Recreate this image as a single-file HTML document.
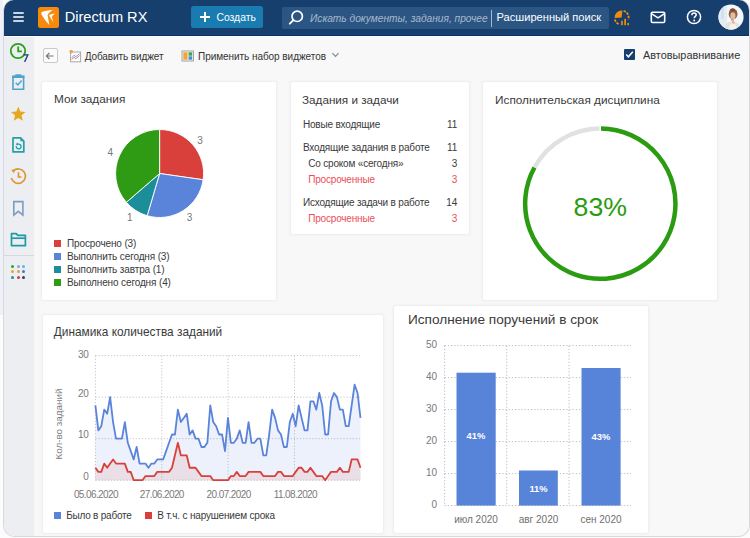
<!DOCTYPE html>
<html><head><meta charset="utf-8">
<style>
html,body{margin:0;padding:0;}
body{width:750px;height:538px;position:relative;overflow:hidden;background:#fcfcfd;font-family:"Liberation Sans", sans-serif;}
.t{position:absolute;white-space:nowrap;line-height:1;}
svg{display:block;}
</style></head><body>
<div style="position:absolute;left:0px;top:0px;width:3px;height:315px;background:#eef1fa"></div>
<div style="position:absolute;left:4px;top:0px;width:745px;height:536px;background:#f8f8f8;border-radius:11px;box-shadow:0 0 0 1px #d9d9d9;overflow:hidden"></div>
<div style="position:absolute;left:4px;top:0;width:745px;height:34.5px;background:#163f6e;border-radius:10px 10px 0 0;border-bottom:1px solid #0d3261"></div>
<div style="position:absolute;left:4px;top:35.5px;width:745px;height:1.2px;background:#ffffff"></div>
<div style="position:absolute;left:4px;top:36.7px;width:30px;height:499.3px;background:#eceef2;border-bottom-left-radius:11px"></div>
<div style="position:absolute;left:4px;top:255px;width:30px;height:1px;background:#d6d8dc"></div>
<div style="position:absolute;left:13.4px;top:12.3px;width:11.1px;height:1.9px;background:#c9d3df;border-radius:1px"></div>
<div style="position:absolute;left:13.4px;top:16.2px;width:11.1px;height:1.9px;background:#c9d3df;border-radius:1px"></div>
<div style="position:absolute;left:13.4px;top:20.1px;width:11.1px;height:1.9px;background:#c9d3df;border-radius:1px"></div>
<svg style="position:absolute;left:38px;top:6.5px" width="21" height="21" viewBox="0 0 21 21">
<rect x="0" y="0" width="21" height="21" rx="2.5" fill="#f7890d"/>
<path d="M3.3 6.1 Q3.5 4.9 5 4.6 C8 3.9 11.5 3.3 14.8 3.1 C12.3 4.6 10.3 6.3 9.6 8.2 C10.2 11.5 10.9 15 11.3 18.1 C8.3 14.8 5.2 10.5 3.6 7.4 Q3.2 6.7 3.3 6.1Z" fill="#fff"/>
<path d="M10.9 8.1 C13 7.1 15 6.6 17.1 6.4 C15.4 7.6 14.2 8.8 13.8 10 C14.3 11.6 14.9 13.3 15.4 15 C13.6 13 11.9 10.5 10.9 8.1Z" fill="#fff"/>
</svg>
<div class="t" style="left:64.70px;top:10px;font-size:14.6px;color:#ffffff;">Directum RX</div>
<div style="position:absolute;left:191px;top:6.3px;width:72px;height:22.2px;background:#1a7bb0;border-radius:2.5px"></div>
<div style="position:absolute;left:200px;top:16.4px;width:10px;height:1.5px;background:#fff"></div>
<div style="position:absolute;left:204.25px;top:12.15px;width:1.5px;height:10px;background:#fff"></div>
<div class="t" style="left:216.40px;top:13px;font-size:10.4px;color:#ffffff;">Создать</div>
<div style="position:absolute;left:282px;top:7px;width:327px;height:21.5px;background:#2b5684;border-radius:2px"></div>
<svg style="position:absolute;left:286px;top:8px" width="20" height="20" viewBox="0 0 20 20">
<circle cx="11.2" cy="8.3" r="5.2" fill="none" stroke="#fff" stroke-width="1.7"/>
<line x1="7.4" y1="12.1" x2="3.8" y2="15.7" stroke="#fff" stroke-width="1.9" stroke-linecap="round"/>
</svg>
<div class="t" style="left:310.00px;top:14px;font-size:10.2px;color:#a9b8cb;font-style:italic">Искать документы, задания, прочее</div>
<div style="position:absolute;left:491.3px;top:9.5px;width:1px;height:17px;background:#a9b8cb"></div>
<div class="t" style="left:496.60px;top:12px;font-size:11.1px;color:#ffffff;">Расширенный поиск</div>
<svg style="position:absolute;left:613px;top:9px" width="18" height="18" viewBox="0 0 18 18">
<path d="M8.6 8.6 L1.6 8.9 A7 7 0 0 1 9.4 1.6 Z" fill="#f28c0f"/>
<path d="M10.6 1.9 A6.9 6.9 0 0 1 15.4 10.4" fill="none" stroke="#f28c0f" stroke-width="1.8" stroke-dasharray="2.4 1.1"/>
<path d="M1.8 10.6 A6.9 6.9 0 0 0 6.4 15.3" fill="none" stroke="#f28c0f" stroke-width="1.8" stroke-dasharray="2.4 1.1"/>
<rect x="8.2" y="11.8" width="1.6" height="4.4" fill="#f28c0f"/>
<rect x="11.3" y="9.8" width="1.7" height="6.4" fill="#f28c0f"/>
<rect x="14.3" y="14" width="1.7" height="2.2" fill="#f28c0f"/>
</svg>
<svg style="position:absolute;left:650px;top:10.7px" width="16" height="13" viewBox="0 0 16 13">
<rect x="1.3" y="1.3" width="13.4" height="10.2" rx="1.2" fill="none" stroke="#fff" stroke-width="1.6"/>
<path d="M1.8 2.8 L8 6.9 L14.2 2.8" fill="none" stroke="#fff" stroke-width="1.5"/>
</svg>
<svg style="position:absolute;left:686px;top:9px" width="16" height="16" viewBox="0 0 16 16">
<circle cx="8" cy="8" r="6.6" fill="none" stroke="#fff" stroke-width="1.5"/>
<path d="M5.9 6.2 C5.9 4.8 6.9 4.1 8.1 4.1 C9.3 4.1 10.2 4.9 10.2 6 C10.2 7.3 8.2 7.6 8.2 9.2" fill="none" stroke="#fff" stroke-width="1.5"/>
<circle cx="8.2" cy="11.5" r="0.95" fill="#fff"/>
</svg>
<svg style="position:absolute;left:717.5px;top:4px" width="26" height="26" viewBox="0 0 26 26">
<defs><clipPath id="av"><circle cx="13" cy="13" r="12.5"/></clipPath></defs>
<circle cx="13" cy="13" r="12.6" fill="#f4f7fa"/>
<g clip-path="url(#av)">
<rect x="0" y="0" width="9" height="26" fill="#e3ebf3"/>
<rect x="3" y="3" width="3" height="12" fill="#d4e0ec"/>
<path d="M6.5 26 C7 19.5 10 17.6 14 17.4 C19 17.6 22 19.5 22.5 26Z" fill="#e4e0da"/>
<path d="M10.5 26 C11 21 12.5 19.5 15 19.3 C17 19.5 18.5 21 19 26Z" fill="#f3f1ee"/>
<ellipse cx="15.1" cy="10" rx="4.4" ry="5.2" fill="#8c5d3f"/>
<ellipse cx="14.6" cy="5.7" rx="2.6" ry="1.5" fill="#7a4d33"/>
<ellipse cx="14.9" cy="11.8" rx="2.6" ry="3.5" fill="#e2bb9c"/>
<path d="M13.2 15.6 L15.6 14.8 L16.6 19.6 L14.6 19.8 Z" fill="#e7b58a"/>
<circle cx="13.9" cy="15.6" r="0.8" fill="#d9708a"/>
</g>
</svg>
<svg style="position:absolute;left:8px;top:41px" width="22" height="22" viewBox="0 0 22 22">
<circle cx="10" cy="10" r="7.2" fill="none" stroke="#2d9f1c" stroke-width="1.8"/>
<path d="M10.2 5.6 V10.3 H13.8" fill="none" stroke="#2d9f1c" stroke-width="1.8"/>
</svg>
<svg style="position:absolute;left:20px;top:52px" width="12" height="12" viewBox="0 0 12 12">
<path d="M3.6 2.9 H7.9 L4.6 9.9" fill="none" stroke="#1d3f73" stroke-width="1.3" stroke-linejoin="miter"/>
</svg>
<svg style="position:absolute;left:11px;top:73px" width="15" height="18" viewBox="0 0 15 18">
<path d="M2 3 V16.2 H12.6 V3" fill="none" stroke="#4ea3cf" stroke-width="1.6"/>
<rect x="1.2" y="2.4" width="12.2" height="2.6" fill="#4ea3cf"/>
<rect x="4.3" y="1.3" width="6" height="2" fill="#4ea3cf"/>
<path d="M4.7 9.8 L6.9 12 L10.6 7.6" fill="none" stroke="#4ea3cf" stroke-width="1.5"/>
</svg>
<svg style="position:absolute;left:10px;top:105.5px" width="17" height="16" viewBox="0 0 17 16">
<path d="M8.3 0.6 L10.3 5.4 L15.6 5.9 L11.6 9.3 L12.8 14.7 L8.3 11.9 L3.8 14.7 L5 9.3 L1 5.9 L6.3 5.4 Z" fill="#e6a81c"/>
</svg>
<svg style="position:absolute;left:11px;top:136px" width="15" height="18" viewBox="0 0 15 18">
<path d="M2 1.9 H9.6 L12.8 5.1 V15.9 H2 Z" fill="none" stroke="#24a0a6" stroke-width="1.7" stroke-linejoin="round"/>
<path d="M9.4 2 V5.3 H12.7" fill="#24a0a6"/>
<path d="M5.3 10.2 A2.4 2.4 0 1 0 7.5 8.1 L5.6 8.1" fill="none" stroke="#24a0a6" stroke-width="1.4"/>
<path d="M4.8 8.2 L6.8 6.6 L6.8 9.8 Z" fill="#24a0a6"/>
</svg>
<svg style="position:absolute;left:9px;top:167px" width="19" height="19" viewBox="0 0 19 19">
<path d="M4.2 4 A7.2 7.2 0 1 1 2.3 11" fill="none" stroke="#df9532" stroke-width="1.6"/>
<path d="M2.2 2.8 L6.3 2.5 L4.7 6.2 Z" fill="#df9532"/>
<path d="M9.5 5.3 V10 H12.4" fill="none" stroke="#df9532" stroke-width="1.6"/>
</svg>
<svg style="position:absolute;left:12px;top:199.5px" width="13" height="17" viewBox="0 0 13 17">
<path d="M1.8 1.6 H10.9 V15 L6.35 11.3 L1.8 15 Z" fill="none" stroke="#7b9dc2" stroke-width="1.6" stroke-linejoin="miter"/>
</svg>
<svg style="position:absolute;left:9.5px;top:231.5px" width="17" height="15" viewBox="0 0 17 15">
<path d="M1.5 1.6 H6.2 L7.8 3.4 H15.4 V13.6 H1.5 Z" fill="none" stroke="#1e9aa2" stroke-width="1.7" stroke-linejoin="round"/>
<path d="M1.5 6.2 H15.4" stroke="#1e9aa2" stroke-width="1.7"/>
</svg>
<div style="position:absolute;left:11.1px;top:264.5px;width:3.4px;height:3.4px;background:#2aa52a;border-radius:50%"></div>
<div style="position:absolute;left:16.55px;top:264.5px;width:3.4px;height:3.4px;background:#8ca9c6;border-radius:50%"></div>
<div style="position:absolute;left:22.0px;top:264.5px;width:3.4px;height:3.4px;background:#63b6d6;border-radius:50%"></div>
<div style="position:absolute;left:11.1px;top:270.05px;width:3.4px;height:3.4px;background:#eaa722;border-radius:50%"></div>
<div style="position:absolute;left:16.55px;top:270.05px;width:3.4px;height:3.4px;background:#d9a152;border-radius:50%"></div>
<div style="position:absolute;left:22.0px;top:270.05px;width:3.4px;height:3.4px;background:#3a7bd2;border-radius:50%"></div>
<div style="position:absolute;left:11.1px;top:275.6px;width:3.4px;height:3.4px;background:#1f90a2;border-radius:50%"></div>
<div style="position:absolute;left:16.55px;top:275.6px;width:3.4px;height:3.4px;background:#e2343f;border-radius:50%"></div>
<div style="position:absolute;left:22.0px;top:275.6px;width:3.4px;height:3.4px;background:#3f4046;border-radius:50%"></div>
<div style="position:absolute;left:42.5px;top:48px;width:15px;height:15px;box-sizing:border-box;border:1px solid #c9c9c9;border-radius:2px;background:#fbfbfb"></div>
<svg style="position:absolute;left:44px;top:49.5px" width="12" height="12" viewBox="0 0 12 12">
<path d="M9.6 6 H2.6 M5.4 3 L2.4 6 L5.4 9" fill="none" stroke="#777" stroke-width="1.2"/>
</svg>
<svg style="position:absolute;left:69px;top:50px" width="13" height="13" viewBox="0 0 13 13">
<rect x="1.6" y="2" width="10" height="9.8" fill="#fff" stroke="#a8a8a8" stroke-width="1"/>
<path d="M2.6 9.4 L5 7.4 L7 8.6 L10.6 5.4" fill="none" stroke="#e46a6a" stroke-width="0.9"/>
<path d="M2.6 7.6 L5 5.4 L7 6.6 L10.6 3.6" fill="none" stroke="#6c9be0" stroke-width="0.9"/>
<circle cx="2.2" cy="1.7" r="1.8" fill="#f2a444"/>
</svg>
<div class="t" style="left:84.70px;top:52px;font-size:10px;color:#333333;letter-spacing:-0.1px">Добавить виджет</div>
<svg style="position:absolute;left:181px;top:50px" width="14" height="12" viewBox="0 0 14 12">
<rect x="1" y="1" width="11.5" height="10" fill="#f4f4f4" stroke="#9a9a9a" stroke-width="0.9"/>
<rect x="2.3" y="2.3" width="4.3" height="7.4" fill="#f3a53a"/>
<rect x="7.6" y="2.3" width="3.6" height="3.4" fill="#3aa84a"/>
<rect x="7.6" y="6.3" width="3.6" height="3.4" fill="#4a8ad8"/>
</svg>
<div class="t" style="left:198.00px;top:52px;font-size:10px;color:#333333;letter-spacing:-0.05px">Применить набор виджетов</div>
<svg style="position:absolute;left:331px;top:52px" width="9" height="6" viewBox="0 0 9 6">
<path d="M1.4 1.2 L4.5 4.3 L7.6 1.2" fill="none" stroke="#888" stroke-width="1.2"/>
</svg>
<div style="position:absolute;left:623.5px;top:49px;width:11px;height:11px;background:#173f6e;border-radius:1px"></div>
<svg style="position:absolute;left:623.5px;top:49px" width="11" height="11" viewBox="0 0 11 11">
<path d="M2.3 5.6 L4.4 7.8 L8.8 2.8" fill="none" stroke="#fff" stroke-width="1.5"/>
</svg>
<div class="t" style="left:643.00px;top:50px;font-size:10.9px;color:#333333;">Автовыравнивание</div>
<div style="position:absolute;left:42px;top:82px;width:234px;height:218px;background:#fff;border-radius:2px;box-shadow:0 0 3px 1px rgba(0,0,0,0.055)"></div>
<div style="position:absolute;left:291px;top:82px;width:177.5px;height:151.5px;background:#fff;border-radius:2px;box-shadow:0 0 3px 1px rgba(0,0,0,0.055)"></div>
<div style="position:absolute;left:482.8px;top:82px;width:234.5px;height:218.3px;background:#fff;border-radius:2px;box-shadow:0 0 3px 1px rgba(0,0,0,0.055)"></div>
<div style="position:absolute;left:42.7px;top:315px;width:340px;height:218px;background:#fff;border-radius:2px;box-shadow:0 0 3px 1px rgba(0,0,0,0.055)"></div>
<div style="position:absolute;left:393.5px;top:306px;width:254.5px;height:227px;background:#fff;border-radius:2px;box-shadow:0 0 3px 1px rgba(0,0,0,0.055)"></div>
<div class="t" style="left:54.00px;top:94px;font-size:11.8px;color:#3a3a3a;">Мои задания</div>
<svg style="position:absolute;left:0;top:0" width="750" height="538"><path d="M159.60 173.50 L159.60 129.50 A44 44 0 0 1 203.15 179.76 Z" fill="#d9403c" stroke="#fff" stroke-width="0.9" stroke-linejoin="round"/><path d="M159.60 173.50 L203.15 179.76 A44 44 0 0 1 147.20 215.72 Z" fill="#5a84d9" stroke="#fff" stroke-width="0.9" stroke-linejoin="round"/><path d="M159.60 173.50 L147.20 215.72 A44 44 0 0 1 126.35 202.31 Z" fill="#1b8e99" stroke="#fff" stroke-width="0.9" stroke-linejoin="round"/><path d="M159.60 173.50 L126.35 202.31 A44 44 0 0 1 159.60 129.50 Z" fill="#2f9b14" stroke="#fff" stroke-width="0.9" stroke-linejoin="round"/></svg>
<div class="t" style="left:0.00px;width:400px;text-align:center;top:136px;font-size:10px;color:#777777;">3</div>
<div class="t" style="left:-10.60px;width:400px;text-align:center;top:213px;font-size:10px;color:#777777;">3</div>
<div class="t" style="left:-70.30px;width:400px;text-align:center;top:213px;font-size:10px;color:#777777;">1</div>
<div class="t" style="left:-89.80px;width:400px;text-align:center;top:148px;font-size:10px;color:#777777;">4</div>
<div style="position:absolute;left:53.5px;top:240.0px;width:7px;height:6.5px;background:#d9403c"></div>
<div class="t" style="left:67.00px;top:239px;font-size:10px;color:#3a3a3a;letter-spacing:-0.13px">Просрочено (3)</div>
<div style="position:absolute;left:53.5px;top:253.1px;width:7px;height:6.5px;background:#5a84d9"></div>
<div class="t" style="left:67.00px;top:252px;font-size:10px;color:#3a3a3a;letter-spacing:-0.13px">Выполнить сегодня (3)</div>
<div style="position:absolute;left:53.5px;top:266.2px;width:7px;height:6.5px;background:#1b8e99"></div>
<div class="t" style="left:67.00px;top:265px;font-size:10px;color:#3a3a3a;letter-spacing:-0.13px">Выполнить завтра (1)</div>
<div style="position:absolute;left:53.5px;top:279.3px;width:7px;height:6.5px;background:#2f9b14"></div>
<div class="t" style="left:67.00px;top:278px;font-size:10px;color:#3a3a3a;letter-spacing:-0.13px">Выполнено сегодня (4)</div>
<div class="t" style="left:302.00px;top:94px;font-size:11.7px;color:#3a3a3a;">Задания и задачи</div>
<div class="t" style="left:302.90px;top:120px;font-size:10px;color:#3a3a3a;letter-spacing:-0.18px">Новые входящие</div>
<div class="t" style="right:292.70px;top:120px;font-size:10px;color:#3a3a3a;">11</div>
<div class="t" style="left:302.90px;top:143px;font-size:10px;color:#3a3a3a;letter-spacing:-0.18px">Входящие задания в работе</div>
<div class="t" style="right:292.70px;top:143px;font-size:10px;color:#3a3a3a;">11</div>
<div class="t" style="left:308.20px;top:159px;font-size:10px;color:#3a3a3a;letter-spacing:-0.18px">Со сроком «сегодня»</div>
<div class="t" style="right:292.70px;top:159px;font-size:10px;color:#3a3a3a;">3</div>
<div class="t" style="left:308.20px;top:175px;font-size:10px;color:#ec4e57;letter-spacing:-0.18px">Просроченные</div>
<div class="t" style="right:292.70px;top:175px;font-size:10px;color:#ec4e57;">3</div>
<div class="t" style="left:302.90px;top:198px;font-size:10px;color:#3a3a3a;letter-spacing:-0.18px">Исходящие задачи в работе</div>
<div class="t" style="right:292.70px;top:198px;font-size:10px;color:#3a3a3a;">14</div>
<div class="t" style="left:308.20px;top:214px;font-size:10px;color:#ec4e57;letter-spacing:-0.18px">Просроченные</div>
<div class="t" style="right:292.70px;top:214px;font-size:10px;color:#ec4e57;">3</div>
<div class="t" style="left:495.00px;top:95px;font-size:11.8px;color:#3a3a3a;">Исполнительская дисциплина</div>
<svg style="position:absolute;left:0;top:0" width="750" height="538">
<path d="M534.64 167.15 A75.15 75.15 0 0 1 599.51 128.55" fill="none" stroke="#e0e1e3" stroke-width="4.4"/>
<path d="M600.96 128.55 A75.15 75.15 0 1 1 534.45 167.50" fill="none" stroke="#2b9c12" stroke-width="4.5"/>
</svg>
<div class="t" style="left:400.30px;width:400px;text-align:center;top:194px;font-size:26.7px;color:#2b9c12;">83%</div>
<div class="t" style="left:53.80px;top:327px;font-size:11.85px;color:#3a3a3a;">Динамика количества заданий</div>
<svg style="position:absolute;left:0;top:0" width="750" height="538">
<line x1="95.4" y1="480.20" x2="360.5" y2="480.20" stroke="#c4c4c4" stroke-width="1" stroke-dasharray="1.2 1.9"/><line x1="95.4" y1="438.67" x2="360.5" y2="438.67" stroke="#c4c4c4" stroke-width="1" stroke-dasharray="1.2 1.9"/><line x1="95.4" y1="397.14" x2="360.5" y2="397.14" stroke="#c4c4c4" stroke-width="1" stroke-dasharray="1.2 1.9"/><line x1="95.4" y1="355.61" x2="360.5" y2="355.61" stroke="#c4c4c4" stroke-width="1" stroke-dasharray="1.2 1.9"/><line x1="95.4" y1="355.61" x2="95.4" y2="480.2" stroke="#c4c4c4" stroke-width="1" stroke-dasharray="1.2 1.9"/><line x1="161.8" y1="355.61" x2="161.8" y2="480.2" stroke="#c4c4c4" stroke-width="1" stroke-dasharray="1.2 1.9"/><line x1="228.1" y1="355.61" x2="228.1" y2="480.2" stroke="#c4c4c4" stroke-width="1" stroke-dasharray="1.2 1.9"/><line x1="294.5" y1="355.61" x2="294.5" y2="480.2" stroke="#c4c4c4" stroke-width="1" stroke-dasharray="1.2 1.9"/>
<polygon points="95.4,480.2 95.40,405.45 98.35,430.36 101.29,426.21 104.24,409.60 107.18,413.75 110.13,397.14 113.07,422.06 116.02,438.67 118.96,438.67 121.91,438.67 124.86,422.06 127.80,442.82 130.75,451.13 133.69,459.44 136.64,446.98 139.58,463.59 142.53,463.59 145.47,463.59 148.42,467.74 151.37,463.59 154.31,463.59 157.26,459.44 160.20,459.44 163.15,459.44 166.09,451.13 169.04,442.82 171.98,434.52 174.93,434.52 177.88,409.60 180.82,422.06 183.77,417.90 186.71,413.75 189.66,434.52 192.60,430.36 195.55,438.67 198.49,438.67 201.44,446.98 204.39,446.98 207.33,442.82 210.28,405.45 213.22,422.06 216.17,426.21 219.11,434.52 222.06,434.52 225.00,451.13 227.95,417.90 230.90,442.82 233.84,442.82 236.79,438.67 239.73,430.36 242.68,442.82 245.62,442.82 248.57,422.06 251.51,442.82 254.46,442.82 257.41,438.67 260.35,438.67 263.30,455.28 266.24,455.28 269.19,434.52 272.13,409.60 275.08,417.90 278.02,430.36 280.97,434.52 283.92,446.98 286.86,446.98 289.81,422.06 292.75,413.75 295.70,426.21 298.64,405.45 301.59,417.90 304.53,430.36 307.48,430.36 310.43,401.29 313.37,401.29 316.32,409.60 319.26,392.99 322.21,405.45 325.15,434.52 328.10,434.52 331.04,401.29 333.99,392.99 336.94,397.14 339.88,409.60 342.83,409.60 345.77,426.21 348.72,426.21 351.66,405.45 354.61,384.68 357.55,392.99 360.50,417.90 360.5,480.2" fill="rgba(90,132,217,0.11)"/>
<polygon points="95.4,480.2 95.40,467.74 98.35,471.89 101.29,471.89 104.24,463.59 107.18,467.74 110.13,463.59 113.07,459.44 116.02,463.59 118.96,463.59 121.91,463.59 124.86,463.59 127.80,471.89 130.75,471.89 133.69,480.20 136.64,480.20 139.58,480.20 142.53,480.20 145.47,476.05 148.42,476.05 151.37,476.05 154.31,476.05 157.26,471.89 160.20,471.89 163.15,471.89 166.09,471.89 169.04,471.89 171.98,467.74 174.93,455.28 177.88,442.82 180.82,455.28 183.77,455.28 186.71,455.28 189.66,467.74 192.60,467.74 195.55,467.74 198.49,471.89 201.44,476.05 204.39,476.05 207.33,476.05 210.28,476.05 213.22,480.20 216.17,480.20 219.11,480.20 222.06,480.20 225.00,480.20 227.95,480.20 230.90,476.05 233.84,476.05 236.79,471.89 239.73,476.05 242.68,476.05 245.62,476.05 248.57,471.89 251.51,471.89 254.46,471.89 257.41,471.89 260.35,471.89 263.30,476.05 266.24,476.05 269.19,476.05 272.13,476.05 275.08,476.05 278.02,471.89 280.97,471.89 283.92,476.05 286.86,476.05 289.81,476.05 292.75,476.05 295.70,471.89 298.64,467.74 301.59,467.74 304.53,471.89 307.48,471.89 310.43,467.74 313.37,471.89 316.32,476.05 319.26,476.05 322.21,476.05 325.15,480.20 328.10,476.05 331.04,471.89 333.99,471.89 336.94,471.89 339.88,467.74 342.83,471.89 345.77,471.89 348.72,471.89 351.66,459.44 354.61,459.44 357.55,459.44 360.50,467.74 360.5,480.2" fill="rgba(217,64,60,0.10)"/>
<polyline points="95.40,405.45 98.35,430.36 101.29,426.21 104.24,409.60 107.18,413.75 110.13,397.14 113.07,422.06 116.02,438.67 118.96,438.67 121.91,438.67 124.86,422.06 127.80,442.82 130.75,451.13 133.69,459.44 136.64,446.98 139.58,463.59 142.53,463.59 145.47,463.59 148.42,467.74 151.37,463.59 154.31,463.59 157.26,459.44 160.20,459.44 163.15,459.44 166.09,451.13 169.04,442.82 171.98,434.52 174.93,434.52 177.88,409.60 180.82,422.06 183.77,417.90 186.71,413.75 189.66,434.52 192.60,430.36 195.55,438.67 198.49,438.67 201.44,446.98 204.39,446.98 207.33,442.82 210.28,405.45 213.22,422.06 216.17,426.21 219.11,434.52 222.06,434.52 225.00,451.13 227.95,417.90 230.90,442.82 233.84,442.82 236.79,438.67 239.73,430.36 242.68,442.82 245.62,442.82 248.57,422.06 251.51,442.82 254.46,442.82 257.41,438.67 260.35,438.67 263.30,455.28 266.24,455.28 269.19,434.52 272.13,409.60 275.08,417.90 278.02,430.36 280.97,434.52 283.92,446.98 286.86,446.98 289.81,422.06 292.75,413.75 295.70,426.21 298.64,405.45 301.59,417.90 304.53,430.36 307.48,430.36 310.43,401.29 313.37,401.29 316.32,409.60 319.26,392.99 322.21,405.45 325.15,434.52 328.10,434.52 331.04,401.29 333.99,392.99 336.94,397.14 339.88,409.60 342.83,409.60 345.77,426.21 348.72,426.21 351.66,405.45 354.61,384.68 357.55,392.99 360.50,417.90" fill="none" stroke="#5a84d9" stroke-width="1.8" stroke-linejoin="round"/>
<polyline points="95.40,467.74 98.35,471.89 101.29,471.89 104.24,463.59 107.18,467.74 110.13,463.59 113.07,459.44 116.02,463.59 118.96,463.59 121.91,463.59 124.86,463.59 127.80,471.89 130.75,471.89 133.69,480.20 136.64,480.20 139.58,480.20 142.53,480.20 145.47,476.05 148.42,476.05 151.37,476.05 154.31,476.05 157.26,471.89 160.20,471.89 163.15,471.89 166.09,471.89 169.04,471.89 171.98,467.74 174.93,455.28 177.88,442.82 180.82,455.28 183.77,455.28 186.71,455.28 189.66,467.74 192.60,467.74 195.55,467.74 198.49,471.89 201.44,476.05 204.39,476.05 207.33,476.05 210.28,476.05 213.22,480.20 216.17,480.20 219.11,480.20 222.06,480.20 225.00,480.20 227.95,480.20 230.90,476.05 233.84,476.05 236.79,471.89 239.73,476.05 242.68,476.05 245.62,476.05 248.57,471.89 251.51,471.89 254.46,471.89 257.41,471.89 260.35,471.89 263.30,476.05 266.24,476.05 269.19,476.05 272.13,476.05 275.08,476.05 278.02,471.89 280.97,471.89 283.92,476.05 286.86,476.05 289.81,476.05 292.75,476.05 295.70,471.89 298.64,467.74 301.59,467.74 304.53,471.89 307.48,471.89 310.43,467.74 313.37,471.89 316.32,476.05 319.26,476.05 322.21,476.05 325.15,480.20 328.10,476.05 331.04,471.89 333.99,471.89 336.94,471.89 339.88,467.74 342.83,471.89 345.77,471.89 348.72,471.89 351.66,459.44 354.61,459.44 357.55,459.44 360.50,467.74" fill="none" stroke="#d9403c" stroke-width="1.8" stroke-linejoin="round"/>
</svg>
<div class="t" style="right:661.70px;top:350px;font-size:10px;color:#7a7a7a;letter-spacing:-0.45px">30</div>
<div class="t" style="right:661.70px;top:389px;font-size:10px;color:#7a7a7a;letter-spacing:-0.45px">20</div>
<div class="t" style="right:661.70px;top:430px;font-size:10px;color:#7a7a7a;letter-spacing:-0.45px">10</div>
<div class="t" style="right:661.70px;top:472px;font-size:10px;color:#7a7a7a;letter-spacing:-0.45px">0</div>
<div class="t" style="left:-104.10px;width:400px;text-align:center;top:490px;font-size:10px;color:#7a7a7a;letter-spacing:-0.6px">05.06.2020</div>
<div class="t" style="left:-38.20px;width:400px;text-align:center;top:490px;font-size:10px;color:#7a7a7a;letter-spacing:-0.6px">27.06.2020</div>
<div class="t" style="left:28.60px;width:400px;text-align:center;top:490px;font-size:10px;color:#7a7a7a;letter-spacing:-0.6px">20.07.2020</div>
<div class="t" style="left:95.40px;width:400px;text-align:center;top:490px;font-size:10px;color:#7a7a7a;letter-spacing:-0.6px">11.08.2020</div>
<div class="t" style="top:418.5px;width:200px;text-align:center;font-size:9.9px;color:#808080;transform:rotate(-90deg);transform-origin:100px 5px;left:-40.8px">Кол-во заданий</div>
<div style="position:absolute;left:53.8px;top:512.3px;width:7px;height:6.5px;background:#5a84d9"></div>
<div class="t" style="left:66.20px;top:511px;font-size:10px;color:#3a3a3a;letter-spacing:-0.22px">Было в работе</div>
<div style="position:absolute;left:144.5px;top:512.3px;width:7px;height:6.5px;background:#d9403c"></div>
<div class="t" style="left:157.20px;top:511px;font-size:10px;color:#3a3a3a;letter-spacing:-0.17px">В т.ч. с нарушением срока</div>
<div class="t" style="left:408.00px;top:313px;font-size:13.64px;color:#3a3a3a;">Исполнение поручений в срок</div>
<svg style="position:absolute;left:0;top:0" width="750" height="538"><line x1="444.6" y1="505.60" x2="631" y2="505.60" stroke="#bdbdbd" stroke-width="1" stroke-dasharray="1.3 1.9"/><line x1="444.6" y1="473.60" x2="631" y2="473.60" stroke="#bdbdbd" stroke-width="1" stroke-dasharray="1.3 1.9"/><line x1="444.6" y1="441.60" x2="631" y2="441.60" stroke="#bdbdbd" stroke-width="1" stroke-dasharray="1.3 1.9"/><line x1="444.6" y1="409.60" x2="631" y2="409.60" stroke="#bdbdbd" stroke-width="1" stroke-dasharray="1.3 1.9"/><line x1="444.6" y1="377.60" x2="631" y2="377.60" stroke="#bdbdbd" stroke-width="1" stroke-dasharray="1.3 1.9"/><line x1="444.6" y1="345.60" x2="631" y2="345.60" stroke="#bdbdbd" stroke-width="1" stroke-dasharray="1.3 1.9"/><line x1="444.6" y1="345.60" x2="444.6" y2="505.6" stroke="#bdbdbd" stroke-width="1" stroke-dasharray="1.3 1.9"/><line x1="506.7" y1="345.60" x2="506.7" y2="505.6" stroke="#bdbdbd" stroke-width="1" stroke-dasharray="1.3 1.9"/><line x1="569" y1="345.60" x2="569" y2="505.6" stroke="#bdbdbd" stroke-width="1" stroke-dasharray="1.3 1.9"/><rect x="456.5" y="372.7" width="39.20" height="132.90" fill="#5783d9"/><rect x="519" y="470.5" width="38.80" height="35.10" fill="#5783d9"/><rect x="581.5" y="368" width="39.10" height="137.60" fill="#5783d9"/></svg>
<div class="t" style="right:313.10px;top:340px;font-size:10px;color:#7a7a7a;letter-spacing:-0.1px">50</div>
<div class="t" style="right:313.10px;top:372px;font-size:10px;color:#7a7a7a;letter-spacing:-0.1px">40</div>
<div class="t" style="right:313.10px;top:404px;font-size:10px;color:#7a7a7a;letter-spacing:-0.1px">30</div>
<div class="t" style="right:313.10px;top:436px;font-size:10px;color:#7a7a7a;letter-spacing:-0.1px">20</div>
<div class="t" style="right:313.10px;top:468px;font-size:10px;color:#7a7a7a;letter-spacing:-0.1px">10</div>
<div class="t" style="right:313.10px;top:500px;font-size:10px;color:#7a7a7a;letter-spacing:-0.1px">0</div>
<div class="t" style="left:276.00px;width:400px;text-align:center;top:515px;font-size:10.0px;color:#6f6f6f;">июл 2020</div>
<div class="t" style="left:338.50px;width:400px;text-align:center;top:515px;font-size:10.0px;color:#6f6f6f;">авг 2020</div>
<div class="t" style="left:401.00px;width:400px;text-align:center;top:515px;font-size:10.0px;color:#6f6f6f;">сен 2020</div>
<div class="t" style="left:276.00px;width:400px;text-align:center;top:431px;font-size:9.4px;color:#ffffff;font-weight:bold">41%</div>
<div class="t" style="left:338.50px;width:400px;text-align:center;top:484px;font-size:9.4px;color:#ffffff;font-weight:bold">11%</div>
<div class="t" style="left:401.00px;width:400px;text-align:center;top:432px;font-size:9.4px;color:#ffffff;font-weight:bold">43%</div>
</body></html>
